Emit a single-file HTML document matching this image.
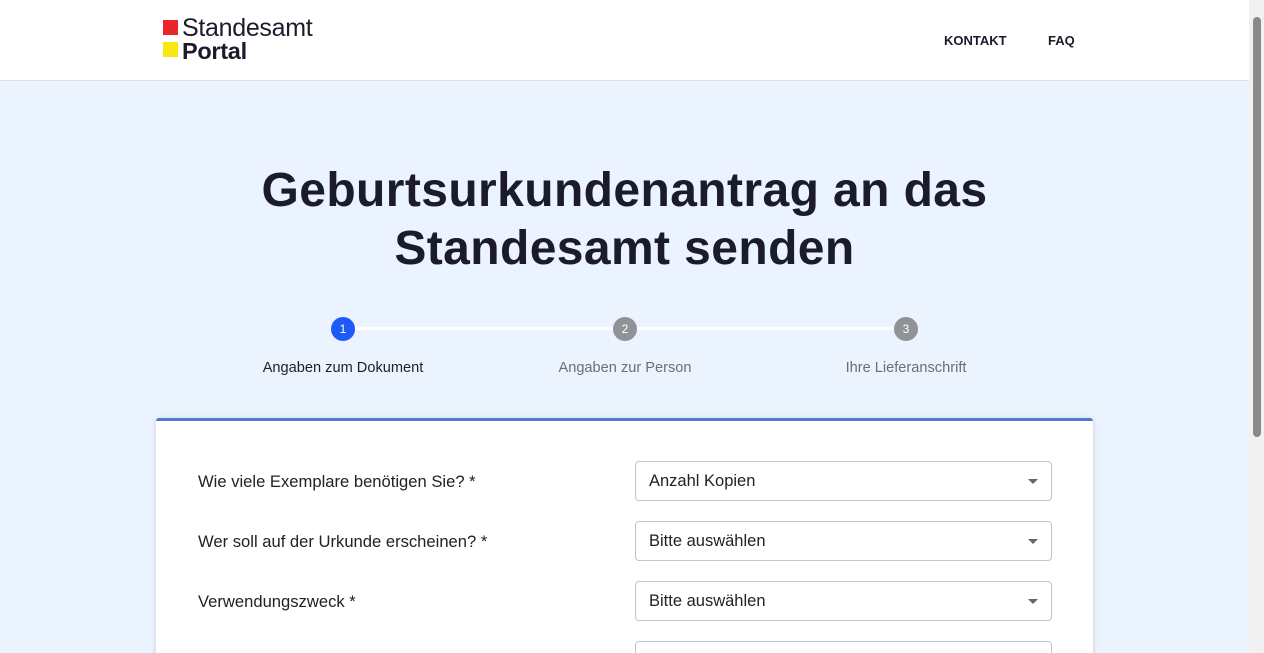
<!DOCTYPE html>
<html style="overflow:hidden;height:653px"><head><style>
*{box-sizing:border-box;margin:0;padding:0}
body{width:1264px;height:653px;overflow:hidden;font-family:"Liberation Sans",sans-serif;background:#ebf3fe;position:relative;color:#1b1b2a}
.hdr{position:absolute;left:0;top:0;width:1249px;height:81px;background:#fff;border-bottom:1px solid #dde2ea}
.sb{position:absolute;right:0;top:0;width:15px;height:653px;background:#f1f1f1}
.thumb{position:absolute;left:4px;top:17px;width:8px;height:420px;background:#8a8a8a;border-radius:4px}
.abs{position:absolute}
.sel{position:absolute;left:635px;width:417px;height:40px;background:#fff;border:1px solid #c4c4c4;border-radius:4px;font-size:16.5px;padding:10px 13px;color:#222}
.sel:after{content:"";position:absolute;right:13px;top:17px;border-left:5px solid transparent;border-right:5px solid transparent;border-top:5px solid #666}
.lbl{position:absolute;left:198px;font-size:16.6px;color:#222}
.c{position:absolute;width:24px;height:24px;border-radius:50%;color:#fff;font-size:12px;text-align:center;line-height:24px;top:317px}
.st{position:absolute;top:360px;font-size:14.6px;width:240px;text-align:center}
</style></head><body>
<div class="hdr">
<div class="abs" style="left:163px;top:20px;width:15px;height:15px;background:#e8262b"></div>
<div class="abs" style="left:163px;top:42px;width:15px;height:15px;background:#f7e90f"></div>
<div class="abs" style="left:182px;top:15px;font-size:25px;letter-spacing:-0.3px;line-height:26px">Standesamt</div>
<div class="abs" style="left:182px;top:38px;font-size:23.5px;font-weight:bold;line-height:26px;letter-spacing:-0.3px">Portal</div>
<div class="abs" style="left:944px;top:33px;font-size:13px;font-weight:bold">KONTAKT</div>
<div class="abs" style="left:1048px;top:33px;font-size:13px;font-weight:bold">FAQ</div>
</div>
<div class="abs" style="left:0;top:162px;width:1249px;text-align:center;font-size:48px;letter-spacing:0.4px;font-weight:bold;line-height:58px">Geburtsurkundenantrag an das<br>Standesamt senden</div>
<div class="abs" style="left:355px;top:327px;width:540px;height:3px;background:#fff"></div>
<div class="c" style="left:331px;background:#1e5bf6">1</div>
<div class="c" style="left:613px;background:#8f9296">2</div>
<div class="c" style="left:894px;background:#8f9296">3</div>
<div class="st" style="left:223px;color:#222">Angaben zum Dokument</div>
<div class="st" style="left:505px;color:#6b6f75">Angaben zur Person</div>
<div class="st" style="left:786px;color:#6b6f75">Ihre Lieferanschrift</div>
<div class="abs" style="left:156px;top:418px;width:937px;height:260px;background:#fff;border-top:3px solid #5577cc;border-radius:3px;box-shadow:0 1px 6px rgba(0,0,0,.15)"></div>
<div class="lbl" style="top:472px">Wie viele Exemplare benötigen Sie? *</div>
<div class="lbl" style="top:532px">Wer soll auf der Urkunde erscheinen? *</div>
<div class="lbl" style="top:592px">Verwendungszweck *</div>
<div class="sel" style="top:461px">Anzahl Kopien</div>
<div class="sel" style="top:521px">Bitte auswählen</div>
<div class="sel" style="top:581px">Bitte auswählen</div>
<div class="sel" style="top:641px"></div>
<div class="sb"><div class="thumb"></div></div>
</body></html>
